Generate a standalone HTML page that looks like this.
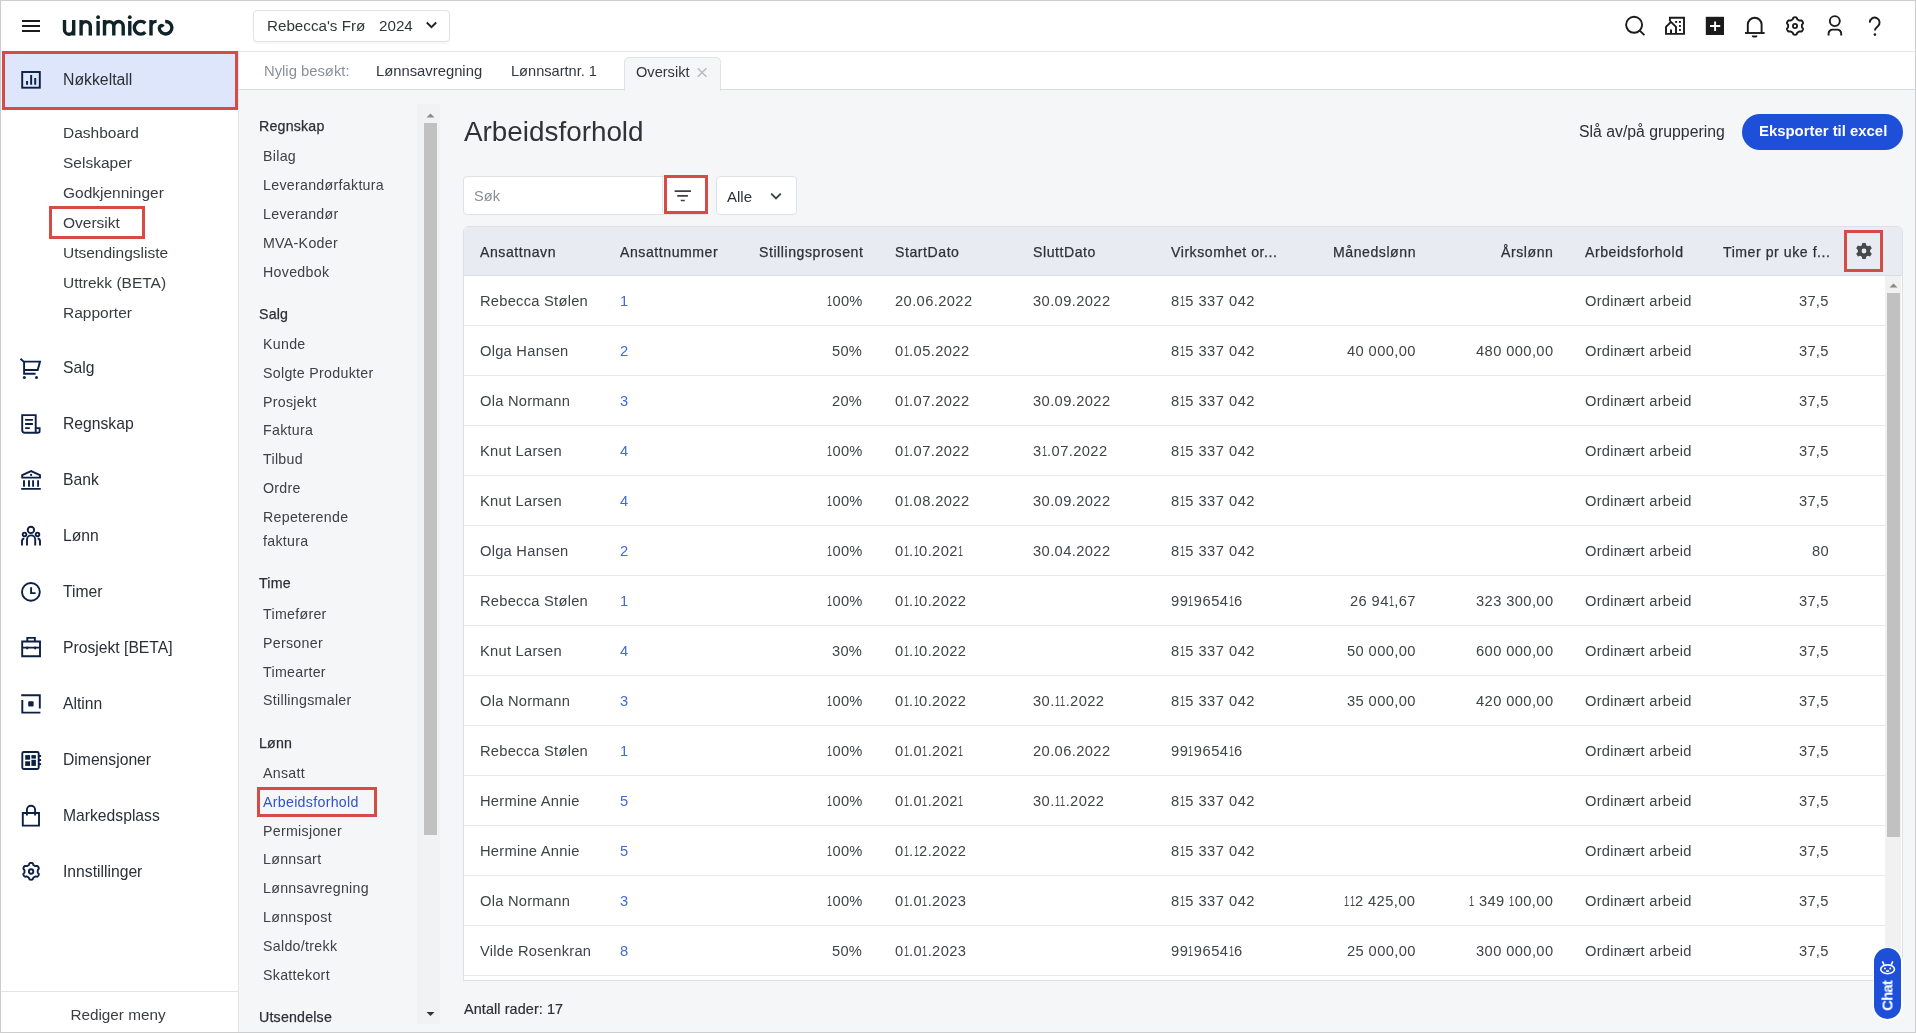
<!DOCTYPE html>
<html><head><meta charset="utf-8"><style>
html,body{margin:0;padding:0;width:1916px;height:1033px;overflow:hidden;background:#fff;}
body{position:relative;font-family:"Liberation Sans", sans-serif;}
.t{position:absolute;white-space:nowrap;font-family:"Liberation Sans", sans-serif;will-change:transform;}
</style></head><body>
<div style="position:absolute;left:0px;top:0px;width:1916px;height:1033px;background:#f5f6f8;"></div><div style="position:absolute;left:0px;top:0px;width:1916px;height:52px;background:#fff;border-bottom:1px solid #e4e6ea;box-sizing:border-box;"></div><div style="position:absolute;left:0px;top:52px;width:239px;height:981px;background:#fff;border-right:1px solid #e4e6ea;box-sizing:border-box;"></div><div style="position:absolute;left:239px;top:52px;width:1677px;height:38px;background:#fff;border-bottom:1px solid #d9dbde;box-sizing:border-box;"></div><svg style="position:absolute;left:0;top:0" width="1916" height="52" viewBox="0 0 1916 52"><g stroke="#1b1b1b" stroke-width="2" fill="none"><path d="M22 21H40M22 26H40M22 31H40"/></g><g transform="translate(0,0.35)" stroke="#0f2328" stroke-width="3.4" fill="none" stroke-linecap="butt"><path d="M64.5 19.6V29.3A4.6 4.6 0 0 0 73.7 29.3V19.6M73.7 29V35.2"/><path d="M81.1 35.2V19.6M81.1 25.9A4.6 4.6 0 0 1 90.3 25.9V35.2"/><path d="M98.1 20.6V35.2"/><path d="M104.5 35.2V19.6M104.5 25.9A4.65 4.65 0 0 1 113.8 25.9V35.2M113.8 25.9A4.7 4.7 0 0 1 123.2 25.9V35.2"/><path d="M129.8 20.6V35.2"/><path d="M145.3 22.9A6.4 6.4 0 1 0 145.3 31.9"/><path d="M151 35.2V19.6M151 26A5.4 5.4 0 0 1 156.6 21"/><path d="M165.2 21.1A6.3 6.3 0 1 1 159.3 27.6C159.6 24.9 162 24.5 163.3 26.4"/></g><g fill="#0f2328"><circle cx="98.1" cy="17.2" r="1.9"/><circle cx="129.8" cy="17.2" r="1.9"/></g><g stroke="#1b1b1b" stroke-width="1.9" fill="none"><circle cx="1634.1" cy="24.8" r="8"/><path d="M1640 30.8L1644.4 35.2"/><path d="M1669.9 20.9V17.8H1684V33.9H1666V26.9L1670.5 22.3M1669.9 20.9L1676 26.8V33.9" stroke-linejoin="miter"/><path d="M1671 29.4V33.9" stroke-width="2"/><path d="M1747.8 33V24.6A6.9 6.9 0 0 1 1761.6 24.6V33"/><path d="M1745 33H1764.6"/><path d="M1801.90 26.00L1801.90 25.76L1801.89 25.52L1801.89 25.28L1801.90 25.03L1801.95 24.77L1802.10 24.49L1802.37 24.16L1802.70 23.79L1802.94 23.42L1803.02 23.08L1803.00 22.77L1802.92 22.47L1802.81 22.19L1802.68 21.92L1802.53 21.65L1802.38 21.39L1802.20 21.14L1802.02 20.90L1801.80 20.69L1801.54 20.51L1801.20 20.42L1800.76 20.44L1800.27 20.54L1799.85 20.61L1799.54 20.59L1799.29 20.51L1799.07 20.39L1798.86 20.27L1798.66 20.15L1798.45 20.02L1798.24 19.91L1798.03 19.79L1797.82 19.67L1797.61 19.54L1797.42 19.36L1797.24 19.10L1797.09 18.70L1796.94 18.23L1796.74 17.84L1796.48 17.59L1796.20 17.45L1795.91 17.38L1795.61 17.33L1795.30 17.31L1795.00 17.30L1794.70 17.31L1794.39 17.33L1794.09 17.38L1793.80 17.45L1793.52 17.59L1793.26 17.84L1793.06 18.23L1792.91 18.70L1792.76 19.10L1792.58 19.36L1792.39 19.54L1792.18 19.67L1791.97 19.79L1791.76 19.91L1791.55 20.02L1791.34 20.15L1791.14 20.27L1790.93 20.39L1790.71 20.51L1790.46 20.59L1790.15 20.61L1789.73 20.54L1789.24 20.44L1788.80 20.42L1788.46 20.51L1788.20 20.69L1787.98 20.90L1787.80 21.14L1787.62 21.39L1787.47 21.65L1787.32 21.92L1787.19 22.19L1787.08 22.47L1787.00 22.77L1786.98 23.08L1787.06 23.42L1787.30 23.79L1787.63 24.16L1787.90 24.49L1788.05 24.77L1788.10 25.03L1788.11 25.28L1788.11 25.52L1788.10 25.76L1788.10 26.00L1788.10 26.24L1788.11 26.48L1788.11 26.72L1788.10 26.97L1788.05 27.23L1787.90 27.51L1787.63 27.84L1787.30 28.21L1787.06 28.58L1786.98 28.92L1787.00 29.23L1787.08 29.53L1787.19 29.81L1787.32 30.08L1787.47 30.35L1787.62 30.61L1787.80 30.86L1787.98 31.10L1788.20 31.31L1788.46 31.49L1788.80 31.58L1789.24 31.56L1789.73 31.46L1790.15 31.39L1790.46 31.41L1790.71 31.49L1790.93 31.61L1791.14 31.73L1791.34 31.85L1791.55 31.98L1791.76 32.09L1791.97 32.21L1792.18 32.33L1792.39 32.46L1792.58 32.64L1792.76 32.90L1792.91 33.30L1793.06 33.77L1793.26 34.16L1793.52 34.41L1793.80 34.55L1794.09 34.62L1794.39 34.67L1794.70 34.69L1795.00 34.70L1795.30 34.69L1795.61 34.67L1795.91 34.62L1796.20 34.55L1796.48 34.41L1796.74 34.16L1796.94 33.77L1797.09 33.30L1797.24 32.90L1797.42 32.64L1797.61 32.46L1797.82 32.33L1798.03 32.21L1798.24 32.09L1798.45 31.98L1798.66 31.85L1798.86 31.73L1799.07 31.61L1799.29 31.49L1799.54 31.41L1799.85 31.39L1800.27 31.46L1800.76 31.56L1801.20 31.58L1801.54 31.49L1801.80 31.31L1802.02 31.10L1802.20 30.86L1802.38 30.61L1802.53 30.35L1802.68 30.08L1802.81 29.81L1802.92 29.53L1803.00 29.23L1803.02 28.92L1802.94 28.58L1802.70 28.21L1802.37 27.84L1802.10 27.51L1801.95 27.23L1801.90 26.97L1801.89 26.72L1801.89 26.48L1801.90 26.24Z" stroke-linejoin="round"/><circle cx="1795" cy="26" r="2.1" stroke-width="1.8"/><circle cx="1834.8" cy="21.1" r="5"/><path d="M1828.6 35.4V33.6A4 4 0 0 1 1832.6 29.6H1837.2A4 4 0 0 1 1841.2 33.6V35.4"/><path d="M1869.8 22.6A4.9 4.9 0 1 1 1877.6 26.4C1875.9 27.6 1874.9 28.5 1874.9 30.6"/></g><g fill="#1b1b1b"><rect x="1705.8" y="16.8" width="18.2" height="18.2"/><circle cx="1874.9" cy="34.6" r="1.3"/><path d="M1751.8 35.4A2.8 2.2 0 0 0 1757.4 35.4Z"/><rect x="1675.2" y="21" width="1.9" height="1.9"/><rect x="1679" y="21" width="1.9" height="1.9"/><rect x="1679" y="25" width="1.9" height="1.9"/><rect x="1679" y="29" width="1.9" height="1.9"/></g><path d="M1710 26H1720.2M1715.1 21.6V31" stroke="#fff" stroke-width="1.9"/></svg><div style="position:absolute;left:253px;top:10px;width:197px;height:32px;border:1px solid #dfe2e6;border-radius:4px;box-sizing:border-box;background:#fff;box-shadow:0 2px 2px rgba(0,0,0,0.035);"></div><svg style="position:absolute;left:0;top:0" width="460" height="52" viewBox="0 0 460 52"><path d="M426.8 22.5L431.5 27.2L436.2 22.5" stroke="#222" stroke-width="1.9" fill="none"/></svg><div class="t" style="top:15.73px;font-size:15.2px;line-height:20px;color:#33363b;left:266.5px;">Rebecca's Frø</div><div class="t" style="top:15.73px;font-size:15.2px;line-height:20px;color:#33363b;left:379.2px;">2024</div><div style="position:absolute;left:2px;top:51px;width:236px;height:59px;background:#dde6fa;border:3px solid #d74b47;box-sizing:border-box;"></div><div class="t" style="top:69.23px;font-size:15.8px;line-height:21px;color:#2b2f36;left:62.6px;">Nøkkeltall</div><div class="t" style="top:122.53px;font-size:15.5px;line-height:20px;color:#393c41;left:62.6px;">Dashboard</div><div class="t" style="top:152.53px;font-size:15.5px;line-height:20px;color:#393c41;left:62.6px;">Selskaper</div><div class="t" style="top:182.53px;font-size:15.5px;line-height:20px;color:#393c41;left:62.6px;">Godkjenninger</div><div class="t" style="top:212.53px;font-size:15.5px;line-height:20px;color:#393c41;left:62.6px;">Oversikt</div><div class="t" style="top:242.53px;font-size:15.5px;line-height:20px;color:#393c41;left:62.6px;">Utsendingsliste</div><div class="t" style="top:272.53px;font-size:15.5px;line-height:20px;color:#393c41;left:62.6px;">Uttrekk (BETA)</div><div class="t" style="top:302.53px;font-size:15.5px;line-height:20px;color:#393c41;left:62.6px;">Rapporter</div><div style="position:absolute;left:49px;top:206px;width:96px;height:33px;border:3px solid #d74b47;box-sizing:border-box;"></div><div class="t" style="top:357.96px;font-size:15.7px;line-height:20px;color:#2b2f36;left:62.6px;">Salg</div><div class="t" style="top:413.96px;font-size:15.7px;line-height:20px;color:#2b2f36;left:62.6px;">Regnskap</div><div class="t" style="top:469.96px;font-size:15.7px;line-height:20px;color:#2b2f36;left:62.6px;">Bank</div><div class="t" style="top:525.96px;font-size:15.7px;line-height:20px;color:#2b2f36;left:62.6px;">Lønn</div><div class="t" style="top:581.96px;font-size:15.7px;line-height:20px;color:#2b2f36;left:62.6px;">Timer</div><div class="t" style="top:637.96px;font-size:15.7px;line-height:20px;color:#2b2f36;left:62.6px;">Prosjekt [BETA]</div><div class="t" style="top:693.96px;font-size:15.7px;line-height:20px;color:#2b2f36;left:62.6px;">Altinn</div><div class="t" style="top:749.96px;font-size:15.7px;line-height:20px;color:#2b2f36;left:62.6px;">Dimensjoner</div><div class="t" style="top:805.96px;font-size:15.7px;line-height:20px;color:#2b2f36;left:62.6px;">Markedsplass</div><div class="t" style="top:861.96px;font-size:15.7px;line-height:20px;color:#2b2f36;left:62.6px;">Innstillinger</div><div style="position:absolute;left:1px;top:991px;width:237px;height:1px;background:#e1e4e8;"></div><div class="t" style="top:1005.40px;font-size:15.3px;line-height:20px;color:#3a3d42;left:-181.6px;width:600px;text-align:center;">Rediger meny</div><svg style="position:absolute;left:0;top:0" width="240" height="900" viewBox="0 0 240 900"><g stroke="#0c1f45" stroke-width="1.9" fill="none"><rect x="22.2" y="72" width="17.6" height="15.7"/><path d="M27.05 81.1V84.8M31.15 74.9V84.8M35.2 78V84.8" stroke-width="1.95"/><path d="M20.5 358.7L23.6 361.6H40L37.7 370H24.1V361.6M24.1 370V373.8H35.6"/></g><g fill="#0c1f45"><circle cx="24.3" cy="377.5" r="1.5"/><circle cx="36.5" cy="377.5" r="1.5"/></g><g stroke="#0c1f45" stroke-width="1.9" fill="none"><path d="M35.7 432.7H25A2.8 2.8 0 0 1 22.2 429.9V415.1H35.7V432.7M35.7 428.1H39.6V430.9A1.8 1.8 0 0 1 37.8 432.7H35.7"/><path d="M25.1 419.9H32.9M25.1 424H32.9M25.1 428.1H29.8"/><path d="M22.2 477.6V475.1L31.1 471.1L40 475.1V477.6Z"/><path d="M24 480.2V486.7M29 480.2V486.7M33.1 480.2V486.7M38.1 480.2V486.7M21.2 488.9H40.8"/></g><g fill="#0c1f45"><circle cx="31.1" cy="474.9" r="1.1"/></g><g stroke="#0c1f45" stroke-width="1.9" fill="none"><circle cx="30.9" cy="529.9" r="3.2"/><circle cx="24.5" cy="534.4" r="1.8"/><circle cx="37.5" cy="534.4" r="1.8"/><path d="M27 545.6V539.5A4.1 4.1 0 0 1 35.2 539.5V545.6M22 545.6V541.3A3 3 0 0 1 24.3 538.3M40 545.6V541.3A3 3 0 0 0 37.7 538.3"/><circle cx="30.9" cy="591.9" r="8.9"/><path d="M31.1 587.3V593.1H35.6"/><path d="M22.2 641.5H40V656.2H22.2Z M22.2 647.6H40M27.2 646.5V649.3M35.1 646.5V649.3M27.3 641.5V637.9H34.9V641.5"/><path d="M21.2 695.3H39.8V708.4M22.3 699.9V712.6H40.4"/></g><g fill="#0c1f45"><rect x="28.2" y="701.3" width="5.4" height="5.2" rx="1"/></g><g stroke="#0c1f45" stroke-width="1.9" fill="none"><rect x="22.3" y="752" width="16.4" height="17" rx="1.5"/></g><g fill="#0c1f45"><rect x="25.2" y="755.1" width="4.9" height="4.6"/><rect x="31.4" y="755.1" width="4.5" height="3.5"/><rect x="25.2" y="761.3" width="4.9" height="4.6"/><rect x="31.4" y="759.8" width="4.5" height="6.1"/><rect x="38.5" y="755" width="2.6" height="1.9"/><rect x="38.5" y="759.1" width="2.6" height="1.9"/><rect x="38.5" y="763.2" width="2.6" height="1.9"/></g><g stroke="#0c1f45" stroke-width="1.9" fill="none"><path d="M22.8 813H39V825.6H22.8Z"/><path d="M26.9 815.6V809.8A4.1 4.1 0 0 1 35.1 809.8V815.6"/><path d="M37.70 871.30L37.70 871.07L37.69 870.84L37.69 870.61L37.70 870.37L37.76 870.13L37.90 869.85L38.17 869.54L38.51 869.18L38.75 868.81L38.84 868.48L38.82 868.18L38.75 867.90L38.64 867.62L38.51 867.36L38.37 867.10L38.22 866.85L38.06 866.61L37.87 866.38L37.66 866.17L37.41 866.00L37.08 865.92L36.64 865.95L36.17 866.05L35.75 866.13L35.45 866.12L35.21 866.04L35.00 865.94L34.80 865.82L34.60 865.70L34.40 865.58L34.20 865.47L34.00 865.36L33.80 865.24L33.60 865.12L33.41 864.95L33.25 864.69L33.11 864.29L32.96 863.82L32.77 863.43L32.53 863.19L32.26 863.05L31.98 862.97L31.69 862.93L31.39 862.91L31.10 862.90L30.81 862.91L30.51 862.93L30.22 862.97L29.94 863.05L29.67 863.19L29.43 863.43L29.24 863.82L29.09 864.29L28.95 864.69L28.79 864.95L28.60 865.12L28.40 865.24L28.20 865.36L28.00 865.47L27.80 865.58L27.60 865.70L27.40 865.82L27.20 865.94L26.99 866.04L26.75 866.12L26.45 866.13L26.03 866.05L25.56 865.95L25.12 865.92L24.79 866.00L24.54 866.17L24.33 866.38L24.14 866.61L23.98 866.85L23.83 867.10L23.69 867.36L23.56 867.62L23.45 867.90L23.38 868.18L23.36 868.48L23.45 868.81L23.69 869.18L24.03 869.54L24.30 869.85L24.44 870.13L24.50 870.37L24.51 870.61L24.51 870.84L24.50 871.07L24.50 871.30L24.50 871.53L24.51 871.76L24.51 871.99L24.50 872.23L24.44 872.47L24.30 872.75L24.03 873.06L23.69 873.42L23.45 873.79L23.36 874.12L23.38 874.42L23.45 874.70L23.56 874.98L23.69 875.24L23.83 875.50L23.98 875.75L24.14 875.99L24.33 876.22L24.54 876.43L24.79 876.60L25.12 876.68L25.56 876.65L26.03 876.55L26.45 876.47L26.75 876.48L26.99 876.56L27.20 876.66L27.40 876.78L27.60 876.90L27.80 877.02L28.00 877.13L28.20 877.24L28.40 877.36L28.60 877.48L28.79 877.65L28.95 877.91L29.09 878.31L29.24 878.78L29.43 879.17L29.67 879.41L29.94 879.55L30.22 879.63L30.51 879.67L30.81 879.69L31.10 879.70L31.39 879.69L31.69 879.67L31.98 879.63L32.26 879.55L32.53 879.41L32.77 879.17L32.96 878.78L33.11 878.31L33.25 877.91L33.41 877.65L33.60 877.48L33.80 877.36L34.00 877.24L34.20 877.13L34.40 877.02L34.60 876.90L34.80 876.78L35.00 876.66L35.21 876.56L35.45 876.48L35.75 876.47L36.17 876.55L36.64 876.65L37.08 876.68L37.41 876.60L37.66 876.43L37.87 876.22L38.06 875.99L38.22 875.75L38.37 875.50L38.51 875.24L38.64 874.98L38.75 874.70L38.82 874.42L38.84 874.12L38.75 873.79L38.51 873.42L38.17 873.06L37.90 872.75L37.76 872.47L37.70 872.23L37.69 871.99L37.69 871.76L37.70 871.53Z" stroke-linejoin="round"/><circle cx="31.1" cy="871.5" r="2.2"/></g></svg><div class="t" style="top:61.67px;font-size:14.8px;line-height:19px;color:#8c9199;left:263.9px;">Nylig besøkt:</div><div class="t" style="top:61.67px;font-size:14.8px;line-height:19px;color:#33363b;left:376.1px;">Lønnsavregning</div><div class="t" style="top:61.74px;font-size:14.6px;line-height:19px;color:#33363b;left:511.4px;">Lønnsartnr. 1</div><div style="position:absolute;left:624px;top:57px;width:97px;height:34px;background:#f5f6f8;border:1px solid #dfe2e6;border-bottom:none;border-radius:5px 5px 0 0;box-sizing:border-box;"></div><div class="t" style="top:63.24px;font-size:14.6px;line-height:19px;color:#33363b;left:635.7px;">Oversikt</div><svg style="position:absolute;left:0;top:0" width="720" height="90" viewBox="0 0 720 90"><path d="M697.8 68.2L706.4 76.8M706.4 68.2L697.8 76.8" stroke="#b9bcc0" stroke-width="1.6"/></svg><div class="t" style="top:116.83px;font-size:14.2px;line-height:18px;color:#2b2f36;left:258.6px;-webkit-text-stroke:0.25px #2b2f36;letter-spacing:0.2px;">Regnskap</div><div class="t" style="top:146.98px;font-size:14.2px;line-height:18px;color:#3d4045;left:262.6px;letter-spacing:0.3px;">Bilag</div><div class="t" style="top:175.98px;font-size:14.2px;line-height:18px;color:#3d4045;left:262.6px;letter-spacing:0.3px;">Leverandørfaktura</div><div class="t" style="top:204.98px;font-size:14.2px;line-height:18px;color:#3d4045;left:262.6px;letter-spacing:0.3px;">Leverandør</div><div class="t" style="top:233.98px;font-size:14.2px;line-height:18px;color:#3d4045;left:262.6px;letter-spacing:0.3px;">MVA-Koder</div><div class="t" style="top:262.98px;font-size:14.2px;line-height:18px;color:#3d4045;left:262.6px;letter-spacing:0.3px;">Hovedbok</div><div class="t" style="top:305.08px;font-size:14.2px;line-height:18px;color:#2b2f36;left:258.6px;-webkit-text-stroke:0.25px #2b2f36;letter-spacing:0.2px;">Salg</div><div class="t" style="top:335.08px;font-size:14.2px;line-height:18px;color:#3d4045;left:262.6px;letter-spacing:0.3px;">Kunde</div><div class="t" style="top:363.88px;font-size:14.2px;line-height:18px;color:#3d4045;left:262.6px;letter-spacing:0.3px;">Solgte Produkter</div><div class="t" style="top:392.68px;font-size:14.2px;line-height:18px;color:#3d4045;left:262.6px;letter-spacing:0.3px;">Prosjekt</div><div class="t" style="top:421.48px;font-size:14.2px;line-height:18px;color:#3d4045;left:262.6px;letter-spacing:0.3px;">Faktura</div><div class="t" style="top:450.28px;font-size:14.2px;line-height:18px;color:#3d4045;left:262.6px;letter-spacing:0.3px;">Tilbud</div><div class="t" style="top:479.08px;font-size:14.2px;line-height:18px;color:#3d4045;left:262.6px;letter-spacing:0.3px;">Ordre</div><div class="t" style="top:507.88px;font-size:14.2px;line-height:18px;color:#3d4045;left:262.6px;letter-spacing:0.3px;">Repeterende</div><div class="t" style="top:532.08px;font-size:14.2px;line-height:18px;color:#3d4045;left:262.6px;letter-spacing:0.3px;">faktura</div><div class="t" style="top:574.08px;font-size:14.2px;line-height:18px;color:#2b2f36;left:258.6px;-webkit-text-stroke:0.25px #2b2f36;letter-spacing:0.2px;">Time</div><div class="t" style="top:605.08px;font-size:14.2px;line-height:18px;color:#3d4045;left:262.6px;letter-spacing:0.3px;">Timefører</div><div class="t" style="top:633.88px;font-size:14.2px;line-height:18px;color:#3d4045;left:262.6px;letter-spacing:0.3px;">Personer</div><div class="t" style="top:662.68px;font-size:14.2px;line-height:18px;color:#3d4045;left:262.6px;letter-spacing:0.3px;">Timearter</div><div class="t" style="top:691.48px;font-size:14.2px;line-height:18px;color:#3d4045;left:262.6px;letter-spacing:0.3px;">Stillingsmaler</div><div class="t" style="top:734.08px;font-size:14.2px;line-height:18px;color:#2b2f36;left:258.6px;-webkit-text-stroke:0.25px #2b2f36;letter-spacing:0.2px;">Lønn</div><div class="t" style="top:764.08px;font-size:14.2px;line-height:18px;color:#3d4045;left:262.6px;letter-spacing:0.3px;">Ansatt</div><div class="t" style="top:792.88px;font-size:14.2px;line-height:18px;color:#2f54c9;left:262.6px;letter-spacing:0.3px;">Arbeidsforhold</div><div class="t" style="top:821.68px;font-size:14.2px;line-height:18px;color:#3d4045;left:262.6px;letter-spacing:0.3px;">Permisjoner</div><div class="t" style="top:850.48px;font-size:14.2px;line-height:18px;color:#3d4045;left:262.6px;letter-spacing:0.3px;">Lønnsart</div><div class="t" style="top:879.28px;font-size:14.2px;line-height:18px;color:#3d4045;left:262.6px;letter-spacing:0.3px;">Lønnsavregning</div><div class="t" style="top:908.08px;font-size:14.2px;line-height:18px;color:#3d4045;left:262.6px;letter-spacing:0.3px;">Lønnspost</div><div class="t" style="top:936.88px;font-size:14.2px;line-height:18px;color:#3d4045;left:262.6px;letter-spacing:0.3px;">Saldo/trekk</div><div class="t" style="top:965.68px;font-size:14.2px;line-height:18px;color:#3d4045;left:262.6px;letter-spacing:0.3px;">Skattekort</div><div class="t" style="top:1008.08px;font-size:14.2px;line-height:18px;color:#2b2f36;left:258.6px;-webkit-text-stroke:0.25px #2b2f36;letter-spacing:0.2px;">Utsendelse</div><div style="position:absolute;left:257px;top:787px;width:120px;height:30px;border:3px solid #d74b47;box-sizing:border-box;"></div><div style="position:absolute;left:417px;top:104px;width:23px;height:920px;background:#f1f2f4;"></div><div style="position:absolute;left:424px;top:123px;width:13px;height:712px;background:#c1c1c1;"></div><svg style="position:absolute;left:0;top:0" width="460" height="1033" viewBox="0 0 460 1033"><path d="M426.5 117.5L430.5 113.5L434.5 117.5Z" fill="#8a8a8a"/><path d="M426.5 1012L430.5 1016L434.5 1012Z" fill="#333"/></svg><div class="t" style="top:113.55px;font-size:27.85px;line-height:36px;color:#2f3237;left:464px;">Arbeidsforhold</div><div class="t" style="top:121.23px;font-size:15.8px;line-height:21px;color:#2b2f36;left:1578.9px;">Slå av/på gruppering</div><div style="position:absolute;left:1742px;top:114px;width:161px;height:36px;background:#1d4fd8;border-radius:18px;"></div><div class="t" style="top:122.34px;font-size:14.9px;line-height:19px;color:#ffffff;font-weight:700;left:1758.5px;">Eksporter til excel</div><div style="position:absolute;left:463px;top:176px;width:244px;height:39px;background:#fff;border:1px solid #dfe2e6;border-radius:4px;box-sizing:border-box;"></div><div style="position:absolute;left:662px;top:176px;width:1px;height:39px;background:#e6e8eb;"></div><div class="t" style="top:187.24px;font-size:14.6px;line-height:19px;color:#8a8f96;left:473.6px;">Søk</div><div style="position:absolute;left:664px;top:175px;width:44px;height:39px;border:3px solid #d74b47;box-sizing:border-box;"></div><div style="position:absolute;left:716px;top:176px;width:81px;height:39px;background:#fff;border:1px solid #dfe2e6;border-radius:4px;box-sizing:border-box;"></div><svg style="position:absolute;left:0;top:0" width="800" height="220" viewBox="0 0 800 220"><path d="M674.6 191.1H691M677.3 195.8H687.9M680.8 200.5H684.8" stroke="#3d4045" stroke-width="1.7"/><path d="M771.2 193.6L776 198.4L780.8 193.6" stroke="#3d4045" stroke-width="1.9" fill="none"/></svg><div class="t" style="top:186.50px;font-size:15px;line-height:20px;color:#2b2f36;left:726.9px;">Alle</div><div style="position:absolute;left:463px;top:226px;width:1440px;height:755px;background:#fff;border:1px solid #dde1e6;border-radius:6px 6px 0 0;box-sizing:border-box;overflow:hidden;"></div><div style="position:absolute;left:464px;top:227px;width:1438px;height:48px;background:#e8ecf2;border-radius:5px 5px 0 0;"></div><div style="position:absolute;left:464px;top:275px;width:1438px;height:1px;background:#d9dde3;"></div><div class="t" style="top:243.01px;font-size:14.1px;line-height:18px;color:#2e3136;left:480.4px;-webkit-text-stroke:0.25px #2e3136;letter-spacing:0.55px;">Ansattnavn</div><div class="t" style="top:243.01px;font-size:14.1px;line-height:18px;color:#2e3136;left:619.7px;-webkit-text-stroke:0.25px #2e3136;letter-spacing:0.55px;">Ansattnummer</div><div class="t" style="top:243.01px;font-size:14.1px;line-height:18px;color:#2e3136;left:759px;-webkit-text-stroke:0.25px #2e3136;letter-spacing:0.55px;">Stillingsprosent</div><div class="t" style="top:243.01px;font-size:14.1px;line-height:18px;color:#2e3136;left:895px;-webkit-text-stroke:0.25px #2e3136;letter-spacing:0.55px;">StartDato</div><div class="t" style="top:243.01px;font-size:14.1px;line-height:18px;color:#2e3136;left:1033px;-webkit-text-stroke:0.25px #2e3136;letter-spacing:0.55px;">SluttDato</div><div class="t" style="top:243.01px;font-size:14.1px;line-height:18px;color:#2e3136;left:1171px;-webkit-text-stroke:0.25px #2e3136;letter-spacing:0.55px;">Virksomhet or...</div><div class="t" style="top:243.01px;font-size:14.1px;line-height:18px;color:#2e3136;left:1333px;-webkit-text-stroke:0.25px #2e3136;letter-spacing:0.55px;">Månedslønn</div><div class="t" style="top:243.01px;font-size:14.1px;line-height:18px;color:#2e3136;right:363px;-webkit-text-stroke:0.25px #2e3136;letter-spacing:0.55px;">Årslønn</div><div class="t" style="top:243.01px;font-size:14.1px;line-height:18px;color:#2e3136;left:1585px;-webkit-text-stroke:0.25px #2e3136;letter-spacing:0.55px;">Arbeidsforhold</div><div class="t" style="top:243.01px;font-size:14.1px;line-height:18px;color:#2e3136;left:1723px;-webkit-text-stroke:0.25px #2e3136;letter-spacing:0.55px;">Timer pr uke f...</div><svg style="position:absolute;left:1852;top:239" width="24" height="24" viewBox="0 0 24 24"><path fill="#45484d" fill-rule="evenodd" d="M10.3 4H13.7L14.2 6.3L15.9 7.2L18.1 6.4L19.8 9.3L18.1 10.9V13.1L19.8 14.7L18.1 17.6L15.9 16.8L14.2 17.7L13.7 20H10.3L9.8 17.7L8.1 16.8L5.9 17.6L4.2 14.7L5.9 13.1V10.9L4.2 9.3L5.9 6.4L8.1 7.2L9.8 6.3Z M12 9.6A2.4 2.4 0 1 0 12 14.4A2.4 2.4 0 1 0 12 9.6Z"/></svg><div style="position:absolute;left:1844px;top:230px;width:39px;height:42px;border:3px solid #d74b47;box-sizing:border-box;"></div><div style="position:absolute;left:464px;top:325px;width:1421px;height:1px;background:#e7e8eb;"></div><div class="t" style="top:291.71px;font-size:14.7px;line-height:19px;color:#404348;left:480.4px;letter-spacing:0.25px;">Rebecca Stølen</div><div class="t" style="top:291.71px;font-size:14.7px;line-height:19px;color:#3f6ad8;left:619.7px;letter-spacing:0.25px;">1</div><div class="t" style="top:291.71px;font-size:14.7px;line-height:19px;color:#404348;right:1053.5px;letter-spacing:0.25px;"><span style="display:inline-block;width:5.5px;transform:scaleX(0.62);transform-origin:0 0;">1</span>00%</div><div class="t" style="top:291.71px;font-size:14.7px;line-height:19px;color:#404348;left:895px;letter-spacing:0.4px;">20.06.2022</div><div class="t" style="top:291.71px;font-size:14.7px;line-height:19px;color:#404348;left:1033px;letter-spacing:0.4px;">30.09.2022</div><div class="t" style="top:291.71px;font-size:14.7px;line-height:19px;color:#404348;left:1171px;letter-spacing:0.5px;">8<span style="display:inline-block;width:5.5px;transform:scaleX(0.62);transform-origin:0 0;">1</span>5 337 042</div><div class="t" style="top:291.71px;font-size:14.7px;line-height:19px;color:#404348;left:1585px;letter-spacing:0.25px;">Ordinært arbeid</div><div class="t" style="top:291.71px;font-size:14.7px;line-height:19px;color:#404348;right:87px;letter-spacing:0.25px;">37,5</div><div style="position:absolute;left:464px;top:375px;width:1421px;height:1px;background:#e7e8eb;"></div><div class="t" style="top:341.71px;font-size:14.7px;line-height:19px;color:#404348;left:480.4px;letter-spacing:0.25px;">Olga Hansen</div><div class="t" style="top:341.71px;font-size:14.7px;line-height:19px;color:#3f6ad8;left:619.7px;letter-spacing:0.25px;">2</div><div class="t" style="top:341.71px;font-size:14.7px;line-height:19px;color:#404348;right:1053.5px;letter-spacing:0.25px;">50%</div><div class="t" style="top:341.71px;font-size:14.7px;line-height:19px;color:#404348;left:895px;letter-spacing:0.4px;">0<span style="display:inline-block;width:5.5px;transform:scaleX(0.62);transform-origin:0 0;">1</span>.05.2022</div><div class="t" style="top:341.71px;font-size:14.7px;line-height:19px;color:#404348;left:1171px;letter-spacing:0.5px;">8<span style="display:inline-block;width:5.5px;transform:scaleX(0.62);transform-origin:0 0;">1</span>5 337 042</div><div class="t" style="top:341.71px;font-size:14.7px;line-height:19px;color:#404348;right:500.5999999999999px;letter-spacing:0.4px;margin-right:-0.4px;">40 000,00</div><div class="t" style="top:341.71px;font-size:14.7px;line-height:19px;color:#404348;right:362.5999999999999px;letter-spacing:0.4px;margin-right:-0.4px;">480 000,00</div><div class="t" style="top:341.71px;font-size:14.7px;line-height:19px;color:#404348;left:1585px;letter-spacing:0.25px;">Ordinært arbeid</div><div class="t" style="top:341.71px;font-size:14.7px;line-height:19px;color:#404348;right:87px;letter-spacing:0.25px;">37,5</div><div style="position:absolute;left:464px;top:425px;width:1421px;height:1px;background:#e7e8eb;"></div><div class="t" style="top:391.71px;font-size:14.7px;line-height:19px;color:#404348;left:480.4px;letter-spacing:0.25px;">Ola Normann</div><div class="t" style="top:391.71px;font-size:14.7px;line-height:19px;color:#3f6ad8;left:619.7px;letter-spacing:0.25px;">3</div><div class="t" style="top:391.71px;font-size:14.7px;line-height:19px;color:#404348;right:1053.5px;letter-spacing:0.25px;">20%</div><div class="t" style="top:391.71px;font-size:14.7px;line-height:19px;color:#404348;left:895px;letter-spacing:0.4px;">0<span style="display:inline-block;width:5.5px;transform:scaleX(0.62);transform-origin:0 0;">1</span>.07.2022</div><div class="t" style="top:391.71px;font-size:14.7px;line-height:19px;color:#404348;left:1033px;letter-spacing:0.4px;">30.09.2022</div><div class="t" style="top:391.71px;font-size:14.7px;line-height:19px;color:#404348;left:1171px;letter-spacing:0.5px;">8<span style="display:inline-block;width:5.5px;transform:scaleX(0.62);transform-origin:0 0;">1</span>5 337 042</div><div class="t" style="top:391.71px;font-size:14.7px;line-height:19px;color:#404348;left:1585px;letter-spacing:0.25px;">Ordinært arbeid</div><div class="t" style="top:391.71px;font-size:14.7px;line-height:19px;color:#404348;right:87px;letter-spacing:0.25px;">37,5</div><div style="position:absolute;left:464px;top:475px;width:1421px;height:1px;background:#e7e8eb;"></div><div class="t" style="top:441.71px;font-size:14.7px;line-height:19px;color:#404348;left:480.4px;letter-spacing:0.25px;">Knut Larsen</div><div class="t" style="top:441.71px;font-size:14.7px;line-height:19px;color:#3f6ad8;left:619.7px;letter-spacing:0.25px;">4</div><div class="t" style="top:441.71px;font-size:14.7px;line-height:19px;color:#404348;right:1053.5px;letter-spacing:0.25px;"><span style="display:inline-block;width:5.5px;transform:scaleX(0.62);transform-origin:0 0;">1</span>00%</div><div class="t" style="top:441.71px;font-size:14.7px;line-height:19px;color:#404348;left:895px;letter-spacing:0.4px;">0<span style="display:inline-block;width:5.5px;transform:scaleX(0.62);transform-origin:0 0;">1</span>.07.2022</div><div class="t" style="top:441.71px;font-size:14.7px;line-height:19px;color:#404348;left:1033px;letter-spacing:0.4px;">3<span style="display:inline-block;width:5.5px;transform:scaleX(0.62);transform-origin:0 0;">1</span>.07.2022</div><div class="t" style="top:441.71px;font-size:14.7px;line-height:19px;color:#404348;left:1171px;letter-spacing:0.5px;">8<span style="display:inline-block;width:5.5px;transform:scaleX(0.62);transform-origin:0 0;">1</span>5 337 042</div><div class="t" style="top:441.71px;font-size:14.7px;line-height:19px;color:#404348;left:1585px;letter-spacing:0.25px;">Ordinært arbeid</div><div class="t" style="top:441.71px;font-size:14.7px;line-height:19px;color:#404348;right:87px;letter-spacing:0.25px;">37,5</div><div style="position:absolute;left:464px;top:525px;width:1421px;height:1px;background:#e7e8eb;"></div><div class="t" style="top:491.71px;font-size:14.7px;line-height:19px;color:#404348;left:480.4px;letter-spacing:0.25px;">Knut Larsen</div><div class="t" style="top:491.71px;font-size:14.7px;line-height:19px;color:#3f6ad8;left:619.7px;letter-spacing:0.25px;">4</div><div class="t" style="top:491.71px;font-size:14.7px;line-height:19px;color:#404348;right:1053.5px;letter-spacing:0.25px;"><span style="display:inline-block;width:5.5px;transform:scaleX(0.62);transform-origin:0 0;">1</span>00%</div><div class="t" style="top:491.71px;font-size:14.7px;line-height:19px;color:#404348;left:895px;letter-spacing:0.4px;">0<span style="display:inline-block;width:5.5px;transform:scaleX(0.62);transform-origin:0 0;">1</span>.08.2022</div><div class="t" style="top:491.71px;font-size:14.7px;line-height:19px;color:#404348;left:1033px;letter-spacing:0.4px;">30.09.2022</div><div class="t" style="top:491.71px;font-size:14.7px;line-height:19px;color:#404348;left:1171px;letter-spacing:0.5px;">8<span style="display:inline-block;width:5.5px;transform:scaleX(0.62);transform-origin:0 0;">1</span>5 337 042</div><div class="t" style="top:491.71px;font-size:14.7px;line-height:19px;color:#404348;left:1585px;letter-spacing:0.25px;">Ordinært arbeid</div><div class="t" style="top:491.71px;font-size:14.7px;line-height:19px;color:#404348;right:87px;letter-spacing:0.25px;">37,5</div><div style="position:absolute;left:464px;top:575px;width:1421px;height:1px;background:#e7e8eb;"></div><div class="t" style="top:541.71px;font-size:14.7px;line-height:19px;color:#404348;left:480.4px;letter-spacing:0.25px;">Olga Hansen</div><div class="t" style="top:541.71px;font-size:14.7px;line-height:19px;color:#3f6ad8;left:619.7px;letter-spacing:0.25px;">2</div><div class="t" style="top:541.71px;font-size:14.7px;line-height:19px;color:#404348;right:1053.5px;letter-spacing:0.25px;"><span style="display:inline-block;width:5.5px;transform:scaleX(0.62);transform-origin:0 0;">1</span>00%</div><div class="t" style="top:541.71px;font-size:14.7px;line-height:19px;color:#404348;left:895px;letter-spacing:0.4px;">0<span style="display:inline-block;width:5.5px;transform:scaleX(0.62);transform-origin:0 0;">1</span>.<span style="display:inline-block;width:5.5px;transform:scaleX(0.62);transform-origin:0 0;">1</span>0.202<span style="display:inline-block;width:5.5px;transform:scaleX(0.62);transform-origin:0 0;">1</span></div><div class="t" style="top:541.71px;font-size:14.7px;line-height:19px;color:#404348;left:1033px;letter-spacing:0.4px;">30.04.2022</div><div class="t" style="top:541.71px;font-size:14.7px;line-height:19px;color:#404348;left:1171px;letter-spacing:0.5px;">8<span style="display:inline-block;width:5.5px;transform:scaleX(0.62);transform-origin:0 0;">1</span>5 337 042</div><div class="t" style="top:541.71px;font-size:14.7px;line-height:19px;color:#404348;left:1585px;letter-spacing:0.25px;">Ordinært arbeid</div><div class="t" style="top:541.71px;font-size:14.7px;line-height:19px;color:#404348;right:87px;letter-spacing:0.25px;">80</div><div style="position:absolute;left:464px;top:625px;width:1421px;height:1px;background:#e7e8eb;"></div><div class="t" style="top:591.71px;font-size:14.7px;line-height:19px;color:#404348;left:480.4px;letter-spacing:0.25px;">Rebecca Stølen</div><div class="t" style="top:591.71px;font-size:14.7px;line-height:19px;color:#3f6ad8;left:619.7px;letter-spacing:0.25px;">1</div><div class="t" style="top:591.71px;font-size:14.7px;line-height:19px;color:#404348;right:1053.5px;letter-spacing:0.25px;"><span style="display:inline-block;width:5.5px;transform:scaleX(0.62);transform-origin:0 0;">1</span>00%</div><div class="t" style="top:591.71px;font-size:14.7px;line-height:19px;color:#404348;left:895px;letter-spacing:0.4px;">0<span style="display:inline-block;width:5.5px;transform:scaleX(0.62);transform-origin:0 0;">1</span>.<span style="display:inline-block;width:5.5px;transform:scaleX(0.62);transform-origin:0 0;">1</span>0.2022</div><div class="t" style="top:591.71px;font-size:14.7px;line-height:19px;color:#404348;left:1171px;letter-spacing:0.5px;">99<span style="display:inline-block;width:5.5px;transform:scaleX(0.62);transform-origin:0 0;">1</span>9654<span style="display:inline-block;width:5.5px;transform:scaleX(0.62);transform-origin:0 0;">1</span>6</div><div class="t" style="top:591.71px;font-size:14.7px;line-height:19px;color:#404348;right:500.5999999999999px;letter-spacing:0.4px;margin-right:-0.4px;">26 94<span style="display:inline-block;width:5.5px;transform:scaleX(0.62);transform-origin:0 0;">1</span>,67</div><div class="t" style="top:591.71px;font-size:14.7px;line-height:19px;color:#404348;right:362.5999999999999px;letter-spacing:0.4px;margin-right:-0.4px;">323 300,00</div><div class="t" style="top:591.71px;font-size:14.7px;line-height:19px;color:#404348;left:1585px;letter-spacing:0.25px;">Ordinært arbeid</div><div class="t" style="top:591.71px;font-size:14.7px;line-height:19px;color:#404348;right:87px;letter-spacing:0.25px;">37,5</div><div style="position:absolute;left:464px;top:675px;width:1421px;height:1px;background:#e7e8eb;"></div><div class="t" style="top:641.71px;font-size:14.7px;line-height:19px;color:#404348;left:480.4px;letter-spacing:0.25px;">Knut Larsen</div><div class="t" style="top:641.71px;font-size:14.7px;line-height:19px;color:#3f6ad8;left:619.7px;letter-spacing:0.25px;">4</div><div class="t" style="top:641.71px;font-size:14.7px;line-height:19px;color:#404348;right:1053.5px;letter-spacing:0.25px;">30%</div><div class="t" style="top:641.71px;font-size:14.7px;line-height:19px;color:#404348;left:895px;letter-spacing:0.4px;">0<span style="display:inline-block;width:5.5px;transform:scaleX(0.62);transform-origin:0 0;">1</span>.<span style="display:inline-block;width:5.5px;transform:scaleX(0.62);transform-origin:0 0;">1</span>0.2022</div><div class="t" style="top:641.71px;font-size:14.7px;line-height:19px;color:#404348;left:1171px;letter-spacing:0.5px;">8<span style="display:inline-block;width:5.5px;transform:scaleX(0.62);transform-origin:0 0;">1</span>5 337 042</div><div class="t" style="top:641.71px;font-size:14.7px;line-height:19px;color:#404348;right:500.5999999999999px;letter-spacing:0.4px;margin-right:-0.4px;">50 000,00</div><div class="t" style="top:641.71px;font-size:14.7px;line-height:19px;color:#404348;right:362.5999999999999px;letter-spacing:0.4px;margin-right:-0.4px;">600 000,00</div><div class="t" style="top:641.71px;font-size:14.7px;line-height:19px;color:#404348;left:1585px;letter-spacing:0.25px;">Ordinært arbeid</div><div class="t" style="top:641.71px;font-size:14.7px;line-height:19px;color:#404348;right:87px;letter-spacing:0.25px;">37,5</div><div style="position:absolute;left:464px;top:725px;width:1421px;height:1px;background:#e7e8eb;"></div><div class="t" style="top:691.71px;font-size:14.7px;line-height:19px;color:#404348;left:480.4px;letter-spacing:0.25px;">Ola Normann</div><div class="t" style="top:691.71px;font-size:14.7px;line-height:19px;color:#3f6ad8;left:619.7px;letter-spacing:0.25px;">3</div><div class="t" style="top:691.71px;font-size:14.7px;line-height:19px;color:#404348;right:1053.5px;letter-spacing:0.25px;"><span style="display:inline-block;width:5.5px;transform:scaleX(0.62);transform-origin:0 0;">1</span>00%</div><div class="t" style="top:691.71px;font-size:14.7px;line-height:19px;color:#404348;left:895px;letter-spacing:0.4px;">0<span style="display:inline-block;width:5.5px;transform:scaleX(0.62);transform-origin:0 0;">1</span>.<span style="display:inline-block;width:5.5px;transform:scaleX(0.62);transform-origin:0 0;">1</span>0.2022</div><div class="t" style="top:691.71px;font-size:14.7px;line-height:19px;color:#404348;left:1033px;letter-spacing:0.4px;">30.<span style="display:inline-block;width:5.5px;transform:scaleX(0.62);transform-origin:0 0;">1</span><span style="display:inline-block;width:5.5px;transform:scaleX(0.62);transform-origin:0 0;">1</span>.2022</div><div class="t" style="top:691.71px;font-size:14.7px;line-height:19px;color:#404348;left:1171px;letter-spacing:0.5px;">8<span style="display:inline-block;width:5.5px;transform:scaleX(0.62);transform-origin:0 0;">1</span>5 337 042</div><div class="t" style="top:691.71px;font-size:14.7px;line-height:19px;color:#404348;right:500.5999999999999px;letter-spacing:0.4px;margin-right:-0.4px;">35 000,00</div><div class="t" style="top:691.71px;font-size:14.7px;line-height:19px;color:#404348;right:362.5999999999999px;letter-spacing:0.4px;margin-right:-0.4px;">420 000,00</div><div class="t" style="top:691.71px;font-size:14.7px;line-height:19px;color:#404348;left:1585px;letter-spacing:0.25px;">Ordinært arbeid</div><div class="t" style="top:691.71px;font-size:14.7px;line-height:19px;color:#404348;right:87px;letter-spacing:0.25px;">37,5</div><div style="position:absolute;left:464px;top:775px;width:1421px;height:1px;background:#e7e8eb;"></div><div class="t" style="top:741.71px;font-size:14.7px;line-height:19px;color:#404348;left:480.4px;letter-spacing:0.25px;">Rebecca Stølen</div><div class="t" style="top:741.71px;font-size:14.7px;line-height:19px;color:#3f6ad8;left:619.7px;letter-spacing:0.25px;">1</div><div class="t" style="top:741.71px;font-size:14.7px;line-height:19px;color:#404348;right:1053.5px;letter-spacing:0.25px;"><span style="display:inline-block;width:5.5px;transform:scaleX(0.62);transform-origin:0 0;">1</span>00%</div><div class="t" style="top:741.71px;font-size:14.7px;line-height:19px;color:#404348;left:895px;letter-spacing:0.4px;">0<span style="display:inline-block;width:5.5px;transform:scaleX(0.62);transform-origin:0 0;">1</span>.0<span style="display:inline-block;width:5.5px;transform:scaleX(0.62);transform-origin:0 0;">1</span>.202<span style="display:inline-block;width:5.5px;transform:scaleX(0.62);transform-origin:0 0;">1</span></div><div class="t" style="top:741.71px;font-size:14.7px;line-height:19px;color:#404348;left:1033px;letter-spacing:0.4px;">20.06.2022</div><div class="t" style="top:741.71px;font-size:14.7px;line-height:19px;color:#404348;left:1171px;letter-spacing:0.5px;">99<span style="display:inline-block;width:5.5px;transform:scaleX(0.62);transform-origin:0 0;">1</span>9654<span style="display:inline-block;width:5.5px;transform:scaleX(0.62);transform-origin:0 0;">1</span>6</div><div class="t" style="top:741.71px;font-size:14.7px;line-height:19px;color:#404348;left:1585px;letter-spacing:0.25px;">Ordinært arbeid</div><div class="t" style="top:741.71px;font-size:14.7px;line-height:19px;color:#404348;right:87px;letter-spacing:0.25px;">37,5</div><div style="position:absolute;left:464px;top:825px;width:1421px;height:1px;background:#e7e8eb;"></div><div class="t" style="top:791.71px;font-size:14.7px;line-height:19px;color:#404348;left:480.4px;letter-spacing:0.25px;">Hermine Annie</div><div class="t" style="top:791.71px;font-size:14.7px;line-height:19px;color:#3f6ad8;left:619.7px;letter-spacing:0.25px;">5</div><div class="t" style="top:791.71px;font-size:14.7px;line-height:19px;color:#404348;right:1053.5px;letter-spacing:0.25px;"><span style="display:inline-block;width:5.5px;transform:scaleX(0.62);transform-origin:0 0;">1</span>00%</div><div class="t" style="top:791.71px;font-size:14.7px;line-height:19px;color:#404348;left:895px;letter-spacing:0.4px;">0<span style="display:inline-block;width:5.5px;transform:scaleX(0.62);transform-origin:0 0;">1</span>.0<span style="display:inline-block;width:5.5px;transform:scaleX(0.62);transform-origin:0 0;">1</span>.202<span style="display:inline-block;width:5.5px;transform:scaleX(0.62);transform-origin:0 0;">1</span></div><div class="t" style="top:791.71px;font-size:14.7px;line-height:19px;color:#404348;left:1033px;letter-spacing:0.4px;">30.<span style="display:inline-block;width:5.5px;transform:scaleX(0.62);transform-origin:0 0;">1</span><span style="display:inline-block;width:5.5px;transform:scaleX(0.62);transform-origin:0 0;">1</span>.2022</div><div class="t" style="top:791.71px;font-size:14.7px;line-height:19px;color:#404348;left:1171px;letter-spacing:0.5px;">8<span style="display:inline-block;width:5.5px;transform:scaleX(0.62);transform-origin:0 0;">1</span>5 337 042</div><div class="t" style="top:791.71px;font-size:14.7px;line-height:19px;color:#404348;left:1585px;letter-spacing:0.25px;">Ordinært arbeid</div><div class="t" style="top:791.71px;font-size:14.7px;line-height:19px;color:#404348;right:87px;letter-spacing:0.25px;">37,5</div><div style="position:absolute;left:464px;top:875px;width:1421px;height:1px;background:#e7e8eb;"></div><div class="t" style="top:841.71px;font-size:14.7px;line-height:19px;color:#404348;left:480.4px;letter-spacing:0.25px;">Hermine Annie</div><div class="t" style="top:841.71px;font-size:14.7px;line-height:19px;color:#3f6ad8;left:619.7px;letter-spacing:0.25px;">5</div><div class="t" style="top:841.71px;font-size:14.7px;line-height:19px;color:#404348;right:1053.5px;letter-spacing:0.25px;"><span style="display:inline-block;width:5.5px;transform:scaleX(0.62);transform-origin:0 0;">1</span>00%</div><div class="t" style="top:841.71px;font-size:14.7px;line-height:19px;color:#404348;left:895px;letter-spacing:0.4px;">0<span style="display:inline-block;width:5.5px;transform:scaleX(0.62);transform-origin:0 0;">1</span>.<span style="display:inline-block;width:5.5px;transform:scaleX(0.62);transform-origin:0 0;">1</span>2.2022</div><div class="t" style="top:841.71px;font-size:14.7px;line-height:19px;color:#404348;left:1171px;letter-spacing:0.5px;">8<span style="display:inline-block;width:5.5px;transform:scaleX(0.62);transform-origin:0 0;">1</span>5 337 042</div><div class="t" style="top:841.71px;font-size:14.7px;line-height:19px;color:#404348;left:1585px;letter-spacing:0.25px;">Ordinært arbeid</div><div class="t" style="top:841.71px;font-size:14.7px;line-height:19px;color:#404348;right:87px;letter-spacing:0.25px;">37,5</div><div style="position:absolute;left:464px;top:925px;width:1421px;height:1px;background:#e7e8eb;"></div><div class="t" style="top:891.71px;font-size:14.7px;line-height:19px;color:#404348;left:480.4px;letter-spacing:0.25px;">Ola Normann</div><div class="t" style="top:891.71px;font-size:14.7px;line-height:19px;color:#3f6ad8;left:619.7px;letter-spacing:0.25px;">3</div><div class="t" style="top:891.71px;font-size:14.7px;line-height:19px;color:#404348;right:1053.5px;letter-spacing:0.25px;"><span style="display:inline-block;width:5.5px;transform:scaleX(0.62);transform-origin:0 0;">1</span>00%</div><div class="t" style="top:891.71px;font-size:14.7px;line-height:19px;color:#404348;left:895px;letter-spacing:0.4px;">0<span style="display:inline-block;width:5.5px;transform:scaleX(0.62);transform-origin:0 0;">1</span>.0<span style="display:inline-block;width:5.5px;transform:scaleX(0.62);transform-origin:0 0;">1</span>.2023</div><div class="t" style="top:891.71px;font-size:14.7px;line-height:19px;color:#404348;left:1171px;letter-spacing:0.5px;">8<span style="display:inline-block;width:5.5px;transform:scaleX(0.62);transform-origin:0 0;">1</span>5 337 042</div><div class="t" style="top:891.71px;font-size:14.7px;line-height:19px;color:#404348;right:500.5999999999999px;letter-spacing:0.4px;margin-right:-0.4px;"><span style="display:inline-block;width:5.5px;transform:scaleX(0.62);transform-origin:0 0;">1</span><span style="display:inline-block;width:5.5px;transform:scaleX(0.62);transform-origin:0 0;">1</span>2 425,00</div><div class="t" style="top:891.71px;font-size:14.7px;line-height:19px;color:#404348;right:362.5999999999999px;letter-spacing:0.4px;margin-right:-0.4px;"><span style="display:inline-block;width:5.5px;transform:scaleX(0.62);transform-origin:0 0;">1</span> 349 <span style="display:inline-block;width:5.5px;transform:scaleX(0.62);transform-origin:0 0;">1</span>00,00</div><div class="t" style="top:891.71px;font-size:14.7px;line-height:19px;color:#404348;left:1585px;letter-spacing:0.25px;">Ordinært arbeid</div><div class="t" style="top:891.71px;font-size:14.7px;line-height:19px;color:#404348;right:87px;letter-spacing:0.25px;">37,5</div><div style="position:absolute;left:464px;top:975px;width:1421px;height:1px;background:#e7e8eb;"></div><div class="t" style="top:941.71px;font-size:14.7px;line-height:19px;color:#404348;left:480.4px;letter-spacing:0.25px;">Vilde Rosenkran</div><div class="t" style="top:941.71px;font-size:14.7px;line-height:19px;color:#3f6ad8;left:619.7px;letter-spacing:0.25px;">8</div><div class="t" style="top:941.71px;font-size:14.7px;line-height:19px;color:#404348;right:1053.5px;letter-spacing:0.25px;">50%</div><div class="t" style="top:941.71px;font-size:14.7px;line-height:19px;color:#404348;left:895px;letter-spacing:0.4px;">0<span style="display:inline-block;width:5.5px;transform:scaleX(0.62);transform-origin:0 0;">1</span>.0<span style="display:inline-block;width:5.5px;transform:scaleX(0.62);transform-origin:0 0;">1</span>.2023</div><div class="t" style="top:941.71px;font-size:14.7px;line-height:19px;color:#404348;left:1171px;letter-spacing:0.5px;">99<span style="display:inline-block;width:5.5px;transform:scaleX(0.62);transform-origin:0 0;">1</span>9654<span style="display:inline-block;width:5.5px;transform:scaleX(0.62);transform-origin:0 0;">1</span>6</div><div class="t" style="top:941.71px;font-size:14.7px;line-height:19px;color:#404348;right:500.5999999999999px;letter-spacing:0.4px;margin-right:-0.4px;">25 000,00</div><div class="t" style="top:941.71px;font-size:14.7px;line-height:19px;color:#404348;right:362.5999999999999px;letter-spacing:0.4px;margin-right:-0.4px;">300 000,00</div><div class="t" style="top:941.71px;font-size:14.7px;line-height:19px;color:#404348;left:1585px;letter-spacing:0.25px;">Ordinært arbeid</div><div class="t" style="top:941.71px;font-size:14.7px;line-height:19px;color:#404348;right:87px;letter-spacing:0.25px;">37,5</div><div style="position:absolute;left:1885px;top:276px;width:16px;height:700px;background:#f1f1f1;"></div><div style="position:absolute;left:1887px;top:293px;width:13px;height:544px;background:#c1c1c1;"></div><svg style="position:absolute;left:0;top:0" width="1916" height="1033" viewBox="0 0 1916 1033"><path d="M1889.5 287.5L1893.5 283.5L1897.5 287.5Z" fill="#8a8a8a"/></svg><div class="t" style="top:1000.21px;font-size:14.4px;line-height:19px;color:#2b2f36;left:463.8px;-webkit-text-stroke:0.2px #2b2f36;letter-spacing:0.1px;">Antall rader: 17</div><div style="position:absolute;left:1872.5px;top:946.5px;width:30px;height:74px;background:#fff;border-radius:15px;"></div><div style="position:absolute;left:1874px;top:948px;width:27px;height:71px;background:#1d4fd8;border-radius:13.5px;"></div><div class="t" style="left:1887px;top:996.4px;transform:translate(-50%,-50%) rotate(-90deg);font-size:15px;line-height:15px;color:#fff;font-weight:700;letter-spacing:-0.9px;white-space:nowrap;">Chat</div><svg style="position:absolute;left:0;top:0" width="1916" height="1033" viewBox="0 0 1916 1033"><g stroke="#fff" stroke-width="1.6" fill="none"><ellipse cx="1887.6" cy="969.3" rx="6.9" ry="4.4"/><path d="M1882.4 961.3L1883.9 964.6M1892.8 961.3L1891.3 964.6M1886.2 970.6Q1887.6 971.8 1889 970.6"/></g><circle cx="1884.9" cy="968.5" r="0.95" fill="#fff"/><circle cx="1890.3" cy="968.5" r="0.95" fill="#fff"/></svg><div style="position:absolute;left:0px;top:0px;width:1916px;height:1033px;border:1px solid #cdcdcd;box-sizing:border-box;pointer-events:none;"></div>
</body></html>
